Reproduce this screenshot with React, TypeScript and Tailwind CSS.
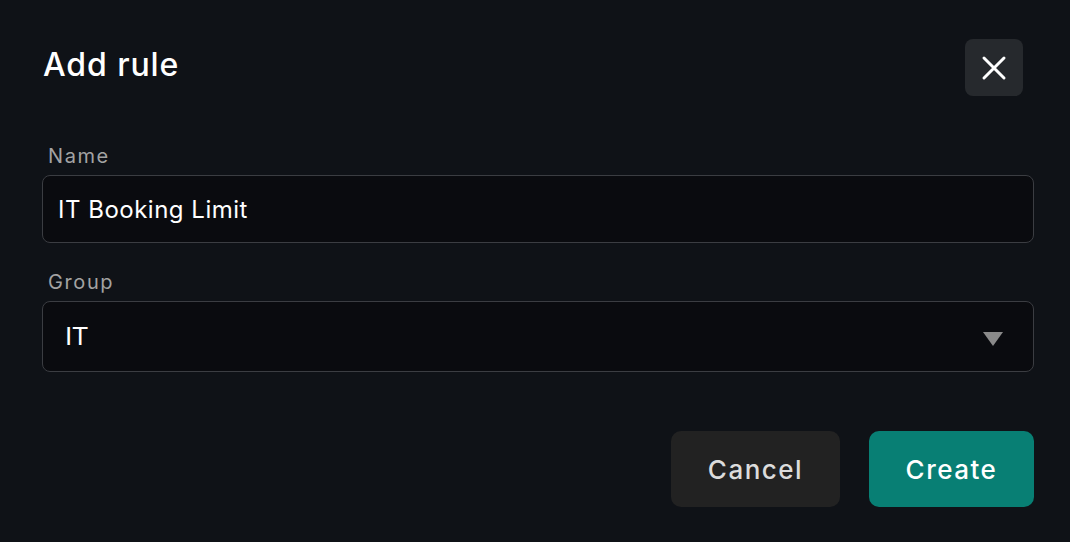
import { useState } from 'react';

export default function App() {
  const [name, setName] = useState('IT Booking Limit');
  const [group, setGroup] = useState('IT');

  return (
    <div className="w-[1070px] h-[542px] bg-[#0f1217] pl-[42px] pr-[36px] pt-[39px] font-['Inter',sans-serif] text-white">
      {/* Header */}
      <div className="flex items-center justify-between h-[57px]">
        <h2 className="pl-[1px] pb-[6px] text-[32px] font-medium tracking-[0.9px]">Add rule</h2>
        <button className="mr-[11px] w-[58px] h-[57px] rounded-[8px] bg-[#26292d] flex items-center justify-center">
          <svg width="30" height="30" viewBox="0 0 24 24" fill="none" stroke="white" strokeWidth="2.4" strokeLinecap="round">
            <path d="M4 4L20 20M20 4L4 20" />
          </svg>
        </button>
      </div>

      {/* Name */}
      <label className="block mt-[46px] pl-[6px] text-[20px] leading-[28px] tracking-[1.6px] text-[#a3a3a3]">Name</label>
      <input
        value={name}
        onChange={(e) => setName(e.target.value)}
        className="mt-[5px] w-full h-[68px] rounded-[8px] border border-[#3b3d42] bg-[#0a0b0f] px-[15px] text-[24px] tracking-[0.5px] text-white outline-none"
      />

      {/* Group */}
      <label className="block mt-[25px] pl-[6px] text-[20px] leading-[28px] tracking-[1.6px] text-[#a3a3a3]">Group</label>
      <div className="relative mt-[5px]">
        <select
          value={group}
          onChange={(e) => setGroup(e.target.value)}
          className="appearance-none w-full h-[71px] rounded-[8px] border border-[#3b3d42] bg-[#0a0b0f] pl-[22px] text-[26px] font-['Liberation_Sans',sans-serif] text-white outline-none"
        >
          <option value="IT">IT</option>
          <option value="HR">HR</option>
        </select>
        <svg className="absolute right-[31px] top-[31px] pointer-events-none" width="20" height="14" viewBox="0 0 20 14">
          <path d="M0 0H20L10 14Z" fill="#8a8a8a" />
        </svg>
      </div>

      {/* Actions */}
      <div className="mt-[59px] flex justify-end gap-[29px]">
        <button className="w-[169px] h-[76px] rounded-[10px] bg-[#222222] text-[26px] font-medium tracking-[1.5px] text-[#dcdcdc]">Cancel</button>
        <button className="w-[165px] h-[76px] rounded-[10px] bg-[#087f74] text-[26px] font-medium tracking-[1.5px] text-white">Create</button>
      </div>
    </div>
  );
}
